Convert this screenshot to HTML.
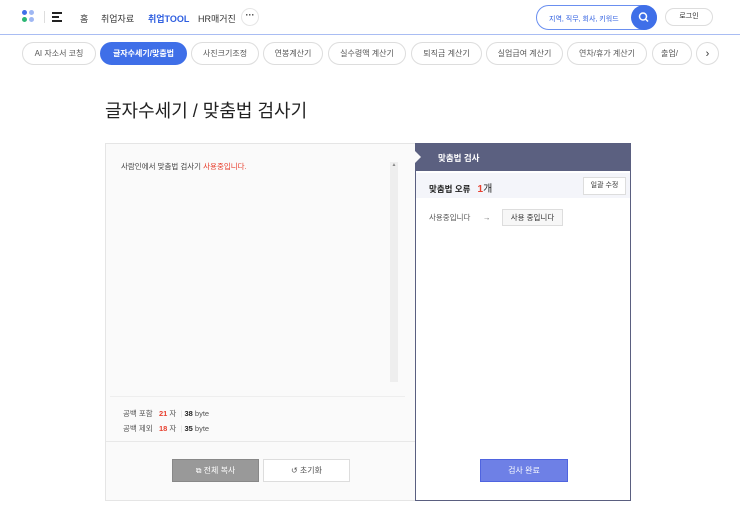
<!DOCTYPE html>
<html><head><meta charset="utf-8"><style>
*{box-sizing:border-box;margin:0;padding:0}
body{width:740px;height:509px;overflow:hidden;background:#fff;font-family:"Liberation Sans","Noto Sans CJK KR",sans-serif;color:#333;position:relative;font-size:8px}
.a{position:absolute}
.hdr{left:0;top:0;width:740px;height:35px;border-bottom:1px solid #a9bdf3}
.dot{width:5px;height:5px;border-radius:50%;position:absolute}
.nav{top:12px;font-size:9px;color:#333}
.pill{position:absolute;top:42px;height:23px;border:1px solid #ddd;border-radius:12px;font-size:8px;color:#555;display:flex;align-items:center;justify-content:center;background:#fff}
.btn{position:absolute;height:23px;display:flex;align-items:center;justify-content:center;font-size:8px}
</style></head><body>
<div class="a hdr">
 <div class="dot" style="left:22px;top:10px;background:#3f6fe8"></div>
 <div class="dot" style="left:29px;top:10px;background:#3f6fe8;opacity:.5"></div>
 <div class="dot" style="left:22px;top:17px;background:#2bb673"></div>
 <div class="dot" style="left:29px;top:17px;background:#3f6fe8;opacity:.5"></div>
 <div class="a" style="left:44px;top:11px;width:1px;height:12px;background:#ddd"></div>
 <div class="a" style="left:52px;top:12px;width:10px;height:1.5px;background:#222"></div>
 <div class="a" style="left:52px;top:16px;width:7px;height:1.5px;background:#222"></div>
 <div class="a" style="left:52px;top:20px;width:10px;height:1.5px;background:#222"></div>
 <div class="a nav" style="left:80px">홈</div>
 <div class="a nav" style="left:101px">취업자료</div>
 <div class="a nav" style="left:148px;color:#2f5fe0;font-weight:bold">취업TOOL</div>
 <div class="a nav" style="left:198px">HR매거진</div>
 <div class="a" style="left:241px;top:8px;width:18px;height:18px;border:1px solid #e5e5e5;border-radius:50%;text-align:center;font-size:9px;line-height:13px;font-weight:bold">···</div>
 <div class="a" style="left:536px;top:5px;width:121px;height:25px;border:1px solid #6a8ff0;border-radius:13px;font-size:7px;color:#2f5fe0;padding:8px 0 0 12px">지역, 직무, 회사, 키워드</div>
 <div class="a" style="left:631px;top:5px;width:26px;height:25px;border-radius:50%;background:#3f6fe8">
  <svg width="26" height="25"><circle cx="12" cy="11.5" r="3.5" stroke="#fff" stroke-width="1.5" fill="none"/><line x1="14.5" y1="14" x2="17" y2="16.5" stroke="#fff" stroke-width="1.5"/></svg></div>
 <div class="a" style="left:665px;top:8px;width:48px;height:18px;border:1px solid #ddd;border-radius:9px;font-size:7px;text-align:center;line-height:16px">로그인</div>
</div>
<div class="pill" style="left:22px;width:74px">AI 자소서 코칭</div>
<div class="pill" style="left:100px;width:87px;background:#3f6fe8;border-color:#3f6fe8;color:#fff;font-weight:bold">글자수세기/맞춤법</div>
<div class="pill" style="left:191px;width:68px">사진크기조정</div>
<div class="pill" style="left:263px;width:60px">연봉계산기</div>
<div class="pill" style="left:328px;width:78px">실수령액 계산기</div>
<div class="pill" style="left:411px;width:71px">퇴직금 계산기</div>
<div class="pill" style="left:486px;width:77px">실업급여 계산기</div>
<div class="pill" style="left:567px;width:80px">연차/휴가 계산기</div>
<div class="pill" style="left:652px;width:40px;justify-content:flex-start;padding-left:8px;overflow:hidden">출업/</div>
<div class="pill" style="left:696px;width:23px;font-size:11px;color:#333">›</div>
<div class="a" style="left:105px;top:97px;font-size:18px;color:#222">글자수세기 / 맞춤법 검사기</div>
<!-- left panel -->
<div class="a" style="left:105px;top:143px;width:311px;height:358px;background:#fafafa;border:1px solid #e5e5e5">
 <div class="a" style="left:15px;top:17px;font-size:7.5px;color:#444">사람인에서 맞춤법 검사기 <span style="color:#e8402f">사용중입니다.</span></div>
 <div class="a" style="left:284px;top:18px;width:8px;height:220px;background:#eee;font-size:5px;color:#888;text-align:center">▲</div>
 <div class="a" style="left:4px;top:252px;width:295px;height:1px;background:#eee"></div>
 <div class="a" style="left:17px;top:262px;font-size:7.5px;color:#555;line-height:15px">공백 포함 &nbsp; <b style="color:#e8402f">21</b> 자 &nbsp;<span style="color:#ddd">|</span> <b style="color:#222">38</b> byte<br>공백 제외 &nbsp; <b style="color:#e8402f">18</b> 자 &nbsp;<span style="color:#ddd">|</span> <b style="color:#222">35</b> byte</div>
 <div class="a" style="left:0;top:297px;width:309px;height:1px;background:#e8e8e8"></div>
 <div class="btn" style="left:66px;top:315px;width:87px;background:#999;color:#fff;border:1px solid #888">⧉ 전체 복사</div>
 <div class="btn" style="left:157px;top:315px;width:87px;background:#fff;border:1px solid #ddd;color:#555">↺ 초기화</div>
</div>
<!-- right panel -->
<div class="a" style="left:415px;top:143px;width:216px;height:358px;background:#fff;border:1px solid #5a5f80">
 <div class="a" style="left:0;top:0;width:214px;height:27px;background:#5b6080;color:#fff;font-size:8.5px;font-weight:bold;padding:8px 0 0 22px">맞춤법 검사</div>
 <div class="a" style="left:-1px;top:7px;width:0;height:0;border-top:6px solid transparent;border-bottom:6px solid transparent;border-left:6px solid #fafafa"></div>
 <div class="a" style="left:0;top:29px;width:214px;height:25px;background:#f4f5fa"></div>
 <div class="a" style="left:13px;top:36px;font-size:8.5px;font-weight:bold;color:#222">맞춤법 오류 &nbsp;&nbsp;<span style="color:#e8402f;font-size:10px">1</span><span style="font-weight:normal;font-size:10px">개</span></div>
 <div class="a" style="left:167px;top:33px;width:43px;height:18px;border:1px solid #ddd;background:#fff;font-size:7px;text-align:center;line-height:16px">일괄 수정</div>
 <div class="a" style="left:13px;top:68px;font-size:7.5px;color:#555">사용중입니다 &nbsp;&nbsp;&nbsp;&nbsp;&nbsp;→</div>
 <div class="a" style="left:86px;top:65px;width:61px;height:17px;border:1px solid #ddd;background:#f7f7f7;font-size:7.5px;text-align:center;line-height:15px">사용 중입니다</div>
 <div class="btn" style="left:64px;top:315px;width:88px;background:#6e80e6;border:1px solid #4f64e0;color:#fff">검사 완료</div>
</div>
</body></html>
